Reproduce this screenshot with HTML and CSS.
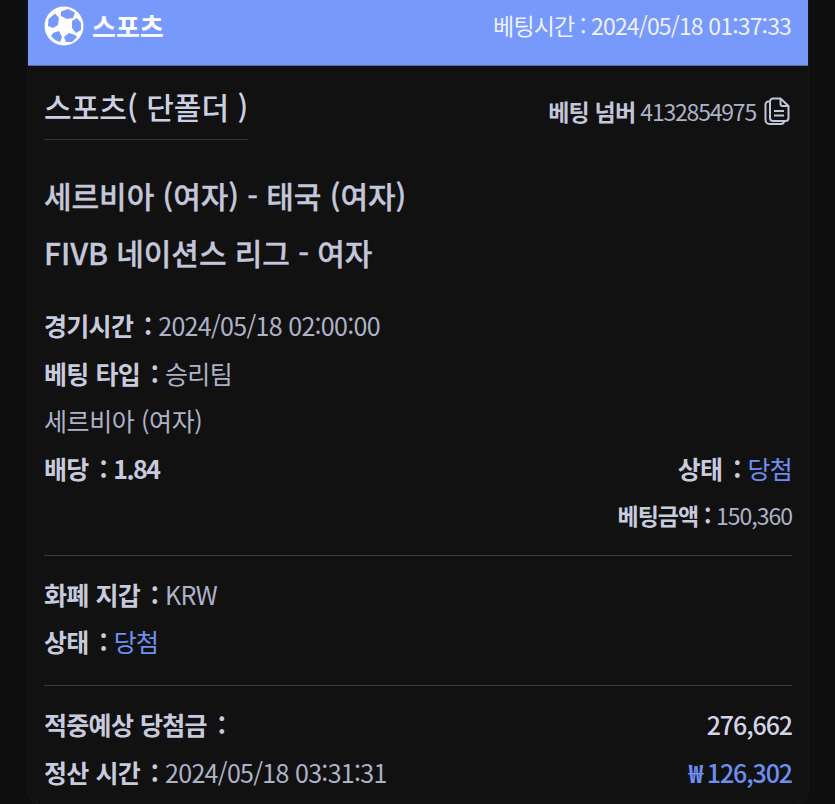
FILE: index.html
```html
<!DOCTYPE html>
<html lang="ko">
<head>
<meta charset="utf-8">
<title>스포츠</title>
<link rel="stylesheet" href="styles.css">
</head>
<body>
<main class="card">
  <header class="head">
    <div class="brand">
      <svg class="ball" viewBox="0 0 40 40" aria-hidden="true">
        <circle cx="20" cy="20" r="19.5" fill="#fff"/>
        <path fill="#7799fb" d="M17 5.500l7-2.500 7 3.500-2 5.500-6 1-6-3zM4.500 13L11 7.500l4 4.500-1 7-5 3-5-2zM28 15l5-3 4 5v7l-5 3-4-5zM25 27l6 2 2 2-5 5-6 0-2-5zM9 27l6-2 3 6-2 5-5-2-4-4z"/>
      </svg>
      <span class="brand-name">스포츠</span>
    </div>
    <div class="bet-time">베팅시간 : 2024/05/18 01:37:33</div>
  </header>
  <div class="body">
    <section class="top">
      <h1 class="title">스포츠( 단폴더 )</h1>
      <div class="number">
        <b>베팅 넘버</b> <span>4132854975</span>
        <svg class="copy" viewBox="0 0 26 28" aria-hidden="true">
          <path d="M6 4.500H4.500a3 3 0 0 0-3 3V23a4 4 0 0 0 4 4H17a3 3 0 0 0 3-2.500"/>
          <path d="M9 1.500h7.500l8 7.500v12a3 3 0 0 1-3 3H9a3 3 0 0 1-3-3V4.500a3 3 0 0 1 3-3z"/>
          <path d="M16.500 1.500V7a2 2 0 0 0 2 2h6"/>
          <path d="M10 14h10M10 18.500h10"/>
        </svg>
      </div>
    </section>
    <section class="match">
      <p>세르비아 (여자) - 태국 (여자)</p>
      <p>FIVB 네이션스 리그 - 여자</p>
    </section>
    <section class="details">
      <div class="row"><div><b>경기시간 <span class="colon">:</span></b> 2024/05/18 02:00:00</div></div>
      <div class="row"><div><b>베팅 타입 <span class="colon">:</span></b> 승리팀</div></div>
      <div class="row plain"><div>세르비아 (여자)</div></div>
      <div class="row"><div><b>배당 <span class="colon">:</span> <span class="odds">1.84</span></b></div><div><b>상태 <span class="colon">:</span></b> <span class="blue">당첨</span></div></div>
      <div class="row end"><div class="stake"><b>베팅금액 :</b> 150,360</div></div>
    </section>
    <section class="details sep">
      <div class="row"><div><b>화폐 지갑 <span class="colon">:</span></b> KRW</div></div>
      <div class="row"><div><b>상태 <span class="colon">:</span></b> <span class="blue">당첨</span></div></div>
    </section>
    <section class="details sep sep-last">
      <div class="row"><div><b>적중예상 당첨금 <span class="colon">:</span></b></div><div class="strong">276,662</div></div>
      <div class="row"><div><b>정산 시간 <span class="colon">:</span></b> 2024/05/18 03:31:31</div><div class="blue strong"><b class="won">₩</b> 126,302</div></div>
    </section>
  </div>
</main>
</body>
</html>
```
FILE: styles.css
```css
* { box-sizing: border-box; }
html, body { margin: 0; height: 804px; overflow: hidden; background: #0e0e0f; }
body {
  padding: 0 27px 0 28px;
  font-family: "Noto Sans CJK KR", "Noto Sans", sans-serif;
  color: #aeb2c6;
  letter-spacing: -0.6px;
}
.card {
  height: 804px;
  background: #111112;
  border-radius: 0 0 14px 14px;
  box-shadow: 0 0 0 1px #17171a;
  overflow: hidden;
}
.head {
  height: 66px;
  background: #7799fb;
  border-bottom: 1px solid #5d6b96;
  display: flex;
  justify-content: space-between;
  align-items: center;
  padding: 0 17px 13px 16px;
}
.brand { display: flex; align-items: center; gap: 8px; }
.ball { width: 40px; height: 40px; }
.brand-name { color: #fff; font-size: 26px; font-weight: 700; letter-spacing: 0; line-height: 1; }
.bet-time { color: #eef1fd; font-size: 23px; letter-spacing: -0.85px; line-height: 1.2; }
.body { padding: 0 16px; }
.top { display: flex; justify-content: space-between; align-items: flex-start; }
.title {
  margin: 21px 0 0;
  padding-bottom: 13px;
  border-bottom: 1px solid #33343a;
  font-size: 30px;
  font-weight: 500;
  line-height: 39px;
  color: #cdd0e3;
  letter-spacing: 0.05px;
}
.number {
  display: flex;
  align-items: center;
  gap: 5px;
  margin-top: 29px;
  padding-right: 2px;
  font-size: 23px;
  line-height: 32px;
}
.number b { color: #c3c6d8; font-weight: 700; letter-spacing: -0.8px; }
.number span { letter-spacing: -1.2px; }
.copy { width: 26px; height: 28px; margin-left: 3px; fill: none; stroke: #c3c6d8; stroke-width: 2; stroke-linejoin: round; }
.match { margin-top: 35px; }
.match p {
  margin: 0 0 17px;
  font-size: 30px;
  line-height: 40px;
  font-weight: 500;
  color: #c4c7da;
  letter-spacing: -0.05px;
  -webkit-text-stroke: 0.3px #c4c7da;
}
.details { margin-top: 30px; font-size: 25px; line-height: 47.5px; letter-spacing: -0.7px; }
.details b { font-weight: 700; color: #c8cbdd; word-spacing: 0.5px; }
.colon { margin-left: 4px; margin-right: 0.500px; }
.odds { margin-left: -1px; letter-spacing: -1.5px; }
.row { display: flex; justify-content: space-between; height: 47.5px; }
.plain { letter-spacing: -0.4px; }
.end { justify-content: flex-end; }
.stake { font-size: 23px; letter-spacing: -1px; }
.blue { color: #6d8ff0; }
.strong { font-weight: 500; color: #d3d5e6; letter-spacing: -1.1px; }
.blue.strong { color: #6d8ff0; }
.details b.won { color: inherit; }
.sep { border-top: 1px solid #3a3b41; margin-top: 15px; padding-top: 15px; }
.sep-last { margin-top: 19px; padding-top: 14px; }
.sep-last .row { height: 48px; line-height: 48px; }
```
